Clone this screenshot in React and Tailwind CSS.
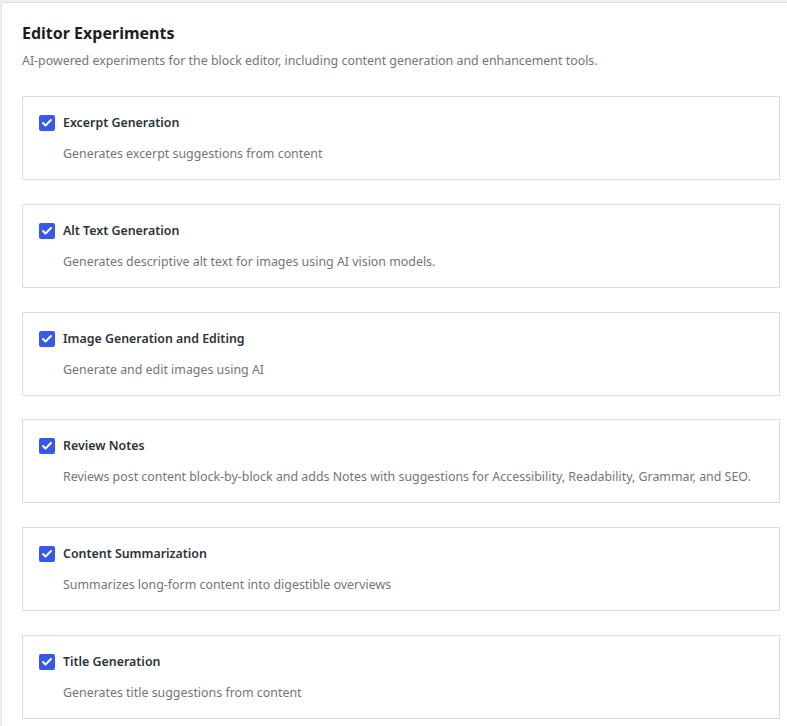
import { Check } from 'lucide-react';

const experiments = [
    { title: 'Excerpt Generation', desc: 'Generates excerpt suggestions from content' },
    { title: 'Alt Text Generation', desc: 'Generates descriptive alt text for images using AI vision models.' },
    { title: 'Image Generation and Editing', desc: 'Generate and edit images using AI' },
    { title: 'Review Notes', desc: 'Reviews post content block-by-block and adds Notes with suggestions for Accessibility, Readability, Grammar, and SEO.' },
    { title: 'Content Summarization', desc: 'Summarizes long-form content into digestible overviews' },
    { title: 'Title Generation', desc: 'Generates title suggestions from content' },
];

export default function App() {
    return (
        <div className="min-h-screen bg-[#f0f0f1] pt-[2px] pl-[1px]" style={{ fontFamily: '"Noto Sans", "Open Sans", sans-serif' }}>
            <div className="min-h-[724px] bg-white border-l border-t border-[#e2e2e2] pl-[20px] pr-[7px] pt-[19px] pb-4">
                <h2 className="text-[16px] leading-[22px] font-bold text-[#1e1e1e]">Editor Experiments</h2>
                <p className="mt-[8px] text-[12.4px] leading-[18px] text-[#757575]">
                    AI-powered experiments for the block editor, including content generation and enhancement tools.
                </p>
                <div className="mt-[26px] flex flex-col gap-[23.8px]">
                    {experiments.map(item => (
                        <div key={item.title} className="h-[84px] border border-[#dcdcde] px-4 pt-[17px]">
                            <label className="flex items-center gap-2">
                                <span className="flex h-4 w-4 items-center justify-center rounded-[2px] bg-[#3858e9]">
                                    <Check className="h-3 w-3 text-white" strokeWidth={4} />
                                </span>
                                <span className="text-[12.4px] leading-[18px] font-semibold text-[#2c3338]">{item.title}</span>
                            </label>
                            <p className="mt-[13px] pl-6 text-[12.4px] leading-[18px] text-[#757575]">{item.desc}</p>
                        </div>
                    ))}
                </div>
            </div>
        </div>
    );
}
